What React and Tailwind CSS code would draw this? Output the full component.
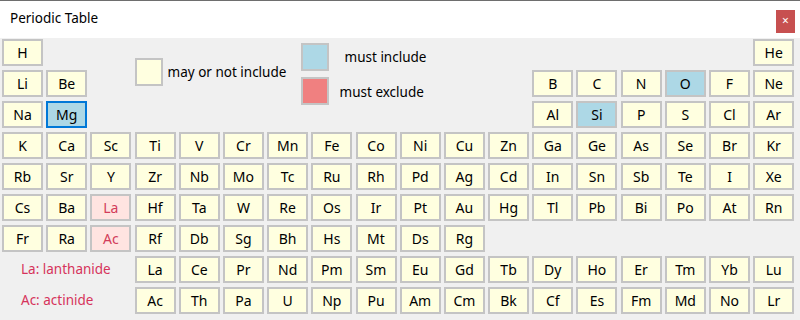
const rows = [
  ["H", null, null, null, null, null, null, null, null, null, null, null, null, null, null, null, null, "He"],
  ["Li", "Be", null, null, null, null, null, null, null, null, null, null, "B", "C", "N", "O", "F", "Ne"],
  ["Na", "Mg", null, null, null, null, null, null, null, null, null, null, "Al", "Si", "P", "S", "Cl", "Ar"],
  ["K", "Ca", "Sc", "Ti", "V", "Cr", "Mn", "Fe", "Co", "Ni", "Cu", "Zn", "Ga", "Ge", "As", "Se", "Br", "Kr"],
  ["Rb", "Sr", "Y", "Zr", "Nb", "Mo", "Tc", "Ru", "Rh", "Pd", "Ag", "Cd", "In", "Sn", "Sb", "Te", "I", "Xe"],
  ["Cs", "Ba", "La*", "Hf", "Ta", "W", "Re", "Os", "Ir", "Pt", "Au", "Hg", "Tl", "Pb", "Bi", "Po", "At", "Rn"],
  ["Fr", "Ra", "Ac*", "Rf", "Db", "Sg", "Bh", "Hs", "Mt", "Ds", "Rg"],
  [null, null, null, "La", "Ce", "Pr", "Nd", "Pm", "Sm", "Eu", "Gd", "Tb", "Dy", "Ho", "Er", "Tm", "Yb", "Lu"],
  [null, null, null, "Ac", "Th", "Pa", "U", "Np", "Pu", "Am", "Cm", "Bk", "Cf", "Es", "Fm", "Md", "No", "Lr"],
];

const included = ["O", "Si", "Mg"];

function Cell({ sym }) {
  const series = sym.endsWith("*");
  const label = series ? sym.slice(0, -1) : sym;
  let cls = "bg-[#ffffe0] border-2 border-[#c4c4c4] text-black";
  if (series) cls = "bg-[#ffe4e1] border-2 border-[#c4c4c4] text-[#d23c5a]";
  if (included.includes(sym)) cls = "bg-[#add8e6] border-2 border-[#c4c4c4] text-black";
  if (sym === "Mg") cls = "bg-[#add8e6] border-2 border-[#0078d7] text-black";
  return (
    <div className={`${cls} flex items-center justify-center text-[14px] leading-none`}>
      {label}
    </div>
  );
}

export default function App() {
  return (
    <div
      className="w-[800px] h-[320px] bg-[#f0f0f0] border-t border-[#6e6e6e] overflow-hidden"
      style={{ fontFamily: '"Segoe UI", "Noto Sans", sans-serif' }}
    >
      <div className="h-[37px] bg-white flex items-center justify-between pl-[10px] pr-[5px]">
        <span className="text-[13.5px] text-black -mt-[2px]">Periodic Table</span>
        <div className="w-[19px] h-[23px] bg-[#c75050] text-white text-[12px] flex items-center justify-center mt-[3px]">
          ×
        </div>
      </div>

      <div className="pt-[1px] pl-[2px] grid grid-cols-[repeat(18,41px)] grid-rows-[repeat(9,27px)] gap-x-[3.2px] gap-y-[4px]">
        {rows.map((row, r) =>
          row.map((sym, c) =>
            sym ? (
              <div key={`${r}-${c}`} className="grid" style={{ gridRow: r + 1, gridColumn: c + 1 }}>
                <Cell sym={sym} />
              </div>
            ) : null
          )
        )}

        <div className="col-start-4 col-span-8 row-start-1 row-span-3 flex items-start text-[13.5px] text-black">
          <div className="w-[166px] flex items-center mt-[19px]">
            <div className="w-[28px] h-[28px] bg-[#ffffe0] border-2 border-[#c4c4c4]" />
            <span className="ml-[5px]">may or not include</span>
          </div>
          <div className="flex flex-col gap-[6px] mt-[4px]">
            <div className="flex items-center">
              <div className="w-[28px] h-[28px] bg-[#add8e6] border-2 border-[#c4c4c4]" />
              <span className="ml-[16px] mt-[1px]">must include</span>
            </div>
            <div className="flex items-center">
              <div className="w-[28px] h-[28px] bg-[#f08080] border-2 border-[#c4c4c4]" />
              <span className="ml-[11px] mt-[3px]">must exclude</span>
            </div>
          </div>
        </div>

        <div className="col-start-1 col-span-3 row-start-8 flex items-center pl-[19px] text-[13.5px] text-[#d6335b]">
          La: lanthanide
        </div>
        <div className="col-start-1 col-span-3 row-start-9 flex items-center pl-[19px] text-[13.5px] text-[#d6335b]">
          Ac: actinide
        </div>
      </div>
    </div>
  );
}
